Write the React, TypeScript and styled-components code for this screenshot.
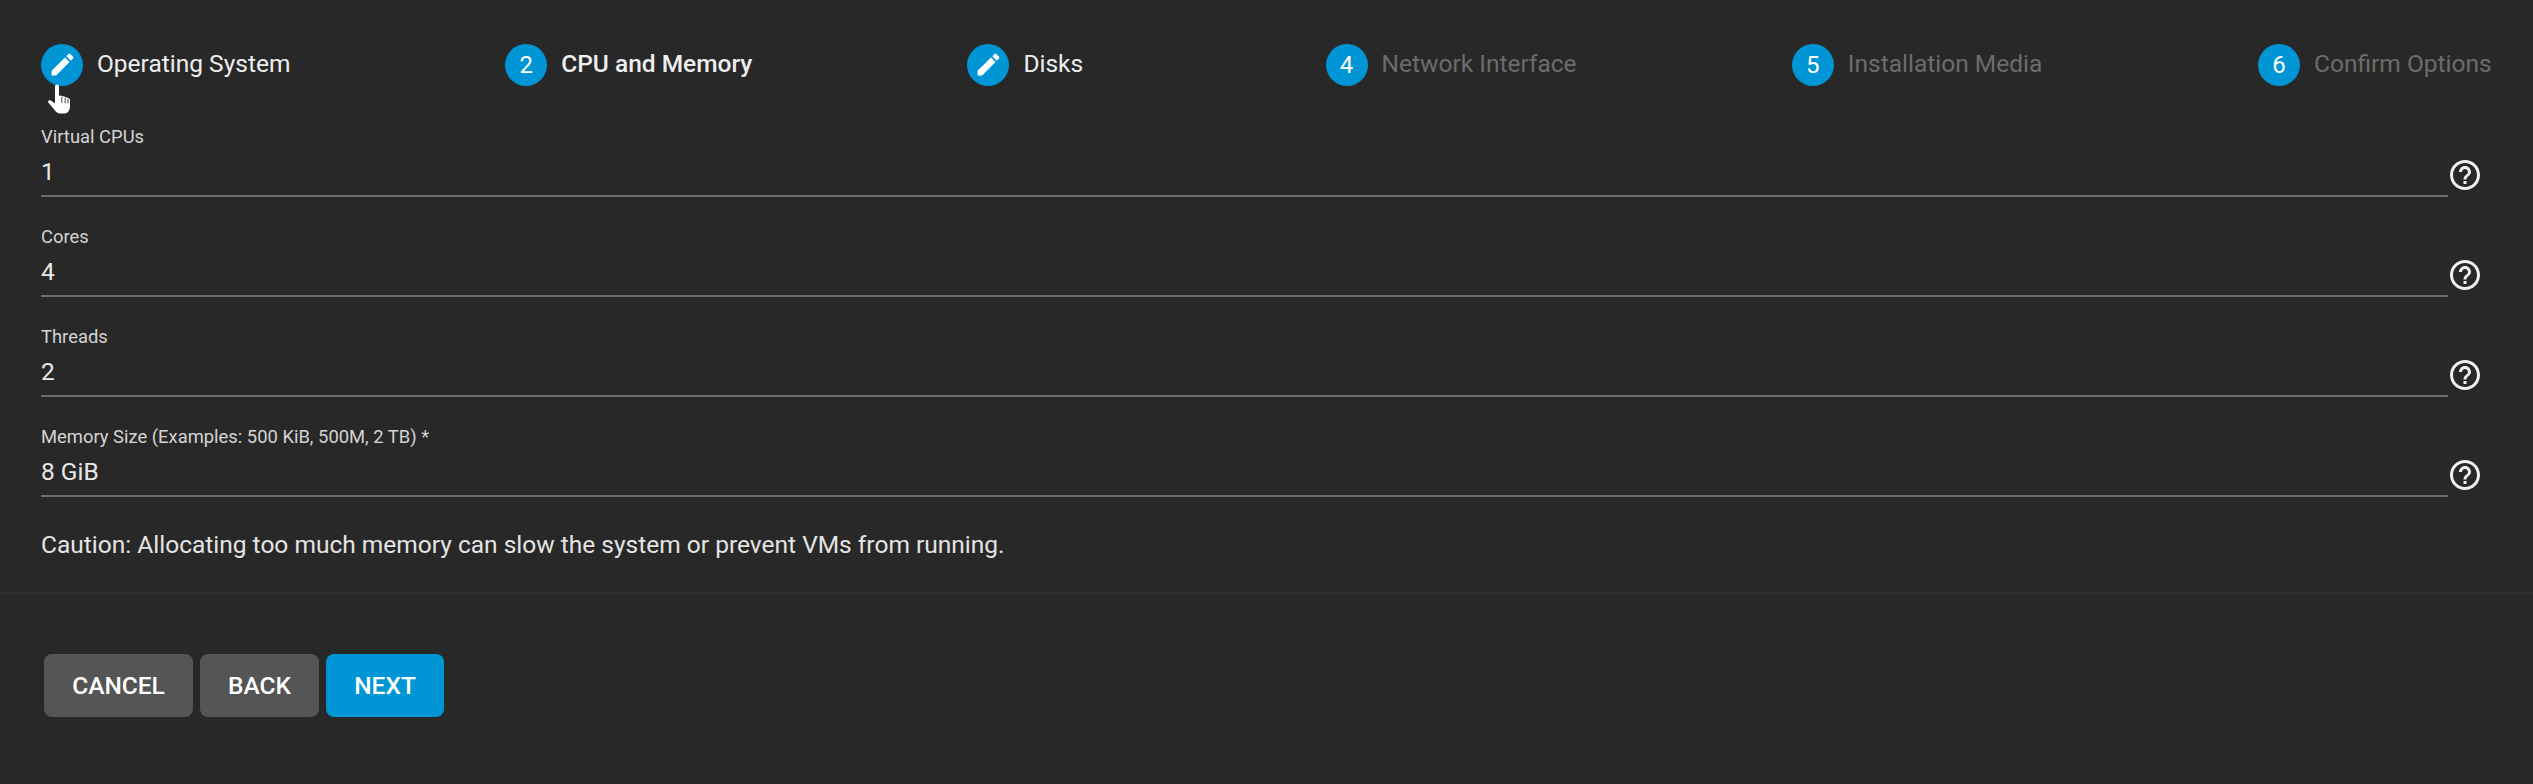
import React from "react";
import styled, { createGlobalStyle } from "styled-components";

const Global = createGlobalStyle`
  html, body { margin: 0; padding: 0; background: #282828; }
  body { font-family: Roboto, "Liberation Sans", sans-serif; color: #e8e8e8; }
`;

const Page = styled.div`
  position: relative;
  width: 2533px;
  height: 784px;
  background: #282828;
  overflow: hidden;
`;

const Stepper = styled.div`
  display: flex;
  align-items: center;
  height: 130px;
  padding: 0 41px;
  box-sizing: border-box;
`;

const Step = styled.div<{ $width: number }>`
  display: flex;
  align-items: center;
  gap: 14px;
  width: ${(p) => p.$width}px;
  flex: none;
`;

const Circle = styled.div`
  width: 42px;
  height: 42px;
  border-radius: 50%;
  background: #0095d5;
  color: #fff;
  font-size: 24px;
  display: flex;
  align-items: center;
  justify-content: center;
  flex: none;
  box-sizing: border-box;
  padding-bottom: 1px;
`;

const StepLabel = styled.span<{ $state: "done" | "active" | "todo" }>`
  font-size: 24.5px;
  white-space: nowrap;
  margin-bottom: 3px;
  font-weight: ${(p) => (p.$state === "active" ? 500 : 400)};
  color: ${(p) => (p.$state === "todo" ? "#6c6c6c" : "#eeeeee")};
`;

const Connector = styled.div`
  flex: 1;
  height: 1px;
  background: #2c2c2c;
`;

const Form = styled.div`
  padding: 0 41px;
`;

const FieldRow = styled.div`
  display: flex;
  align-items: flex-start;
  height: 100px;
`;

const FieldBody = styled.div`
  width: 2407px;
  height: 65px;
  border-bottom: 2px solid #6e6e6e;
  display: flex;
  flex-direction: column;
`;

const FieldLabel = styled.label`
  font-size: 18.4px;
  line-height: 22px;
  margin-top: -4px;
  color: #d4d4d4;
`;

const FieldValue = styled.div`
  font-size: 24.5px;
  line-height: 30px;
  margin-top: 9px;
  color: #e8e8e8;
`;

const Help = styled.div`
  margin-left: -1px;
  margin-top: 27px;
  width: 36px;
  height: 36px;
  flex: none;
  color: #f0f0f0;
`;

const Caution = styled.p`
  margin: 0;
  font-size: 24.5px;
  line-height: 30px;
  color: #e4e4e4;
`;

const Divider = styled.div`
  height: 2px;
  background: #2f2f2f;
  margin-top: 32px;
`;

const Actions = styled.div`
  display: flex;
  gap: 7px;
  padding: 60px 0 0 44px;
`;

const Button = styled.button<{ $primary?: boolean; $width: number }>`
  height: 63px;
  width: ${(p) => p.$width}px;
  border: none;
  border-radius: 8px;
  padding: 0;
  background: ${(p) => (p.$primary ? "#0095d5" : "#555555")};
  color: #fff;
  font-family: Roboto, "Liberation Sans", sans-serif;
  font-size: 24.5px;
  font-weight: 500;
`;

const Cursor = styled.svg`
  position: absolute;
  left: 47px;
  top: 84px;
  width: 26px;
  height: 30px;
`;

const Pencil = () => (
  <svg width="29" height="29" viewBox="0 0 24 24" fill="#fff">
    <path d="M3 17.25V21h3.75L17.81 9.94l-3.75-3.75L3 17.25zM20.71 7.04a1 1 0 0 0 0-1.41l-2.34-2.34a1 1 0 0 0-1.41 0l-1.83 1.83 3.75 3.75 1.83-1.83z" />
  </svg>
);

const HelpIcon = () => (
  <svg width="36" height="36" viewBox="0 0 24 24" fill="currentColor">
    <path d="M11 18h2v-2h-2v2zm1-16C6.48 2 2 6.48 2 12s4.48 10 10 10 10-4.48 10-10S17.52 2 12 2zm0 18c-4.41 0-8-3.59-8-8s3.59-8 8-8 8 3.59 8 8-3.59 8-8 8zm0-14c-2.21 0-4 1.79-4 4h2c0-1.1.9-2 2-2s2 .9 2 2c0 2-3 1.75-3 5h2c0-2.25 3-2.5 3-5 0-2.21-1.79-4-4-4z" />
  </svg>
);

const steps: { label: string; state: "done" | "active" | "todo"; mark: string; width: number }[] = [
  { label: "Operating System", state: "done", mark: "edit", width: 249 },
  { label: "CPU and Memory", state: "active", mark: "2", width: 247 },
  { label: "Disks", state: "done", mark: "edit", width: 143 },
  { label: "Network Interface", state: "todo", mark: "4", width: 251 },
  { label: "Installation Media", state: "todo", mark: "5", width: 251 },
  { label: "Confirm Options", state: "todo", mark: "6", width: 234 },
];

const fields = [
  { label: "Virtual CPUs", value: "1" },
  { label: "Cores", value: "4" },
  { label: "Threads", value: "2" },
  { label: "Memory Size (Examples: 500 KiB, 500M, 2 TB) *", value: "8 GiB" },
];

export default function App() {
  return (
    <Page>
      <Global />
      <Stepper>
        {steps.map((s, i) => (
          <React.Fragment key={s.label}>
            <Step $width={s.width}>
              <Circle>{s.mark === "edit" ? <Pencil /> : s.mark}</Circle>
              <StepLabel $state={s.state}>{s.label}</StepLabel>
            </Step>
            {i < steps.length - 1 && <Connector />}
          </React.Fragment>
        ))}
      </Stepper>
      <Form>
        {fields.map((f) => (
          <FieldRow key={f.label}>
            <FieldBody>
              <FieldLabel>{f.label}</FieldLabel>
              <FieldValue>{f.value}</FieldValue>
            </FieldBody>
            <Help>
              <HelpIcon />
            </Help>
          </FieldRow>
        ))}
        <Caution>Caution: Allocating too much memory can slow the system or prevent VMs from running.</Caution>
      </Form>
      <Divider />
      <Actions>
        <Button $width={149}>CANCEL</Button>
        <Button $width={119}>BACK</Button>
        <Button $width={118} $primary>NEXT</Button>
      </Actions>
      <Cursor viewBox="0 0 26 30">
        <path
          d="M10 0.5c1.2 0 2 .9 2 2V12c1-.8 2.6-.6 3.2.5 1-.6 2.5-.3 3 .8 1-.4 2.4 0 2.8 1.1.9-.2 2 .5 2 1.8V22c0 3.2-1.5 7.5-5.5 7.5h-4c-3.2 0-4.8-1.8-6.5-4.2L1.3 18.6c-.9-1.5.8-3 2.3-2.1L8 19.2V2.5c0-1.1.8-2 2-2z"
          fill="#fff"
        />
        <path d="M14.8 13.5v5M18.2 14.2v4.8M21 15.4v3.6" stroke="#444" strokeWidth="1" fill="none" strokeLinecap="round" />
      </Cursor>
    </Page>
  );
}
